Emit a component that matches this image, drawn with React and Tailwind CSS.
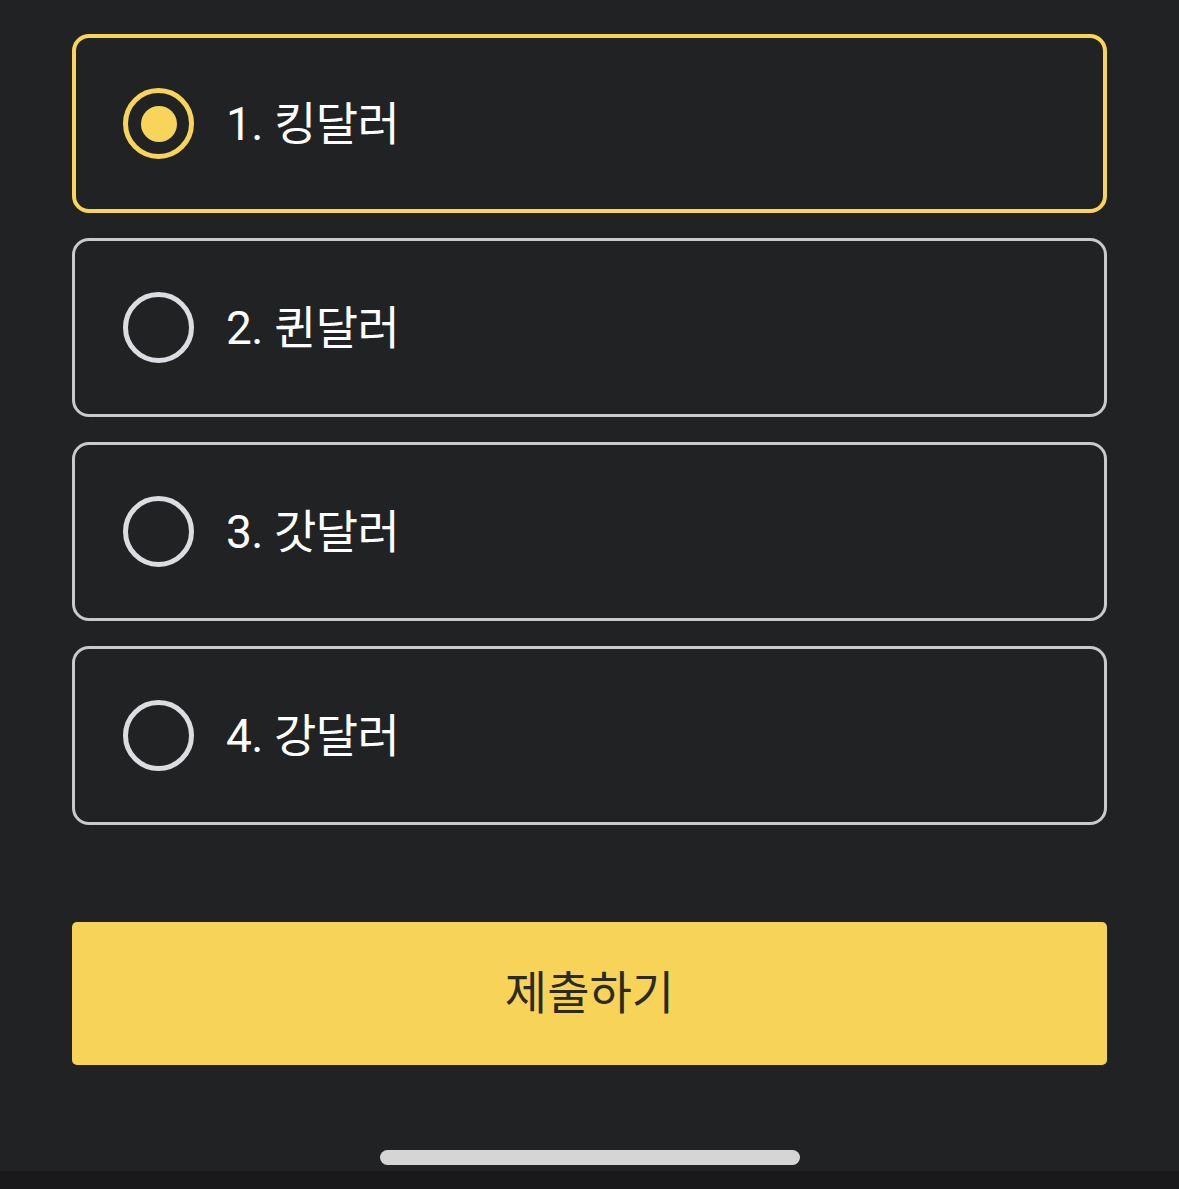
import { useState } from 'react'

const options = ['킹달러', '퀸달러', '갓달러', '강달러']

function Radio({ checked }) {
  if (checked) {
    return (
      <span className="flex h-[71px] w-[71px] shrink-0 items-center justify-center rounded-full border-[5px] border-[#f8d45a]">
        <span className="h-[36px] w-[36px] rounded-full bg-[#f8d45a]" />
      </span>
    )
  }
  return <span className="h-[71px] w-[71px] shrink-0 rounded-full border-[5px] border-[#dcdde0]" />
}

export default function App() {
  const [selected, setSelected] = useState(0)

  return (
    <div
      className="flex min-h-[1189px] w-full flex-col bg-[#212224] text-white"
      style={{ fontFamily: 'Roboto, "Noto Sans CJK KR", sans-serif' }}
    >
      <div className="flex flex-col gap-[25px] px-[72px] pt-[34px]">
        {options.map((label, i) => {
          const active = selected === i
          return (
            <button
              key={label}
              onClick={() => setSelected(i)}
              className={
                active
                  ? 'flex h-[179px] items-center gap-[32px] rounded-[17px] border-[4px] border-[#f8d45a] pl-[47px] text-left'
                  : 'flex h-[179px] items-center gap-[32px] rounded-[17px] border-[3px] border-[#c9cacc] pl-[48px] text-left'
              }
            >
              <Radio checked={active} />
              <span className="text-[46px] leading-none tracking-[-0.5px] text-white">
                {i + 1}. {label}
              </span>
            </button>
          )
        })}
      </div>

      <div className="mt-[97px] px-[72px]">
        <button className="flex h-[143px] w-full items-center justify-center rounded-[5px] bg-[#f7d458] text-[46px] text-[#2b2a25]">
          제출하기
        </button>
      </div>

      <div className="flex flex-1 justify-center pt-[85px]">
        <div className="h-[15px] w-[420px] rounded-full bg-[#d5d5d5]" />
      </div>
      <div className="mt-[6px] h-[18px] w-full bg-[#19191b]" />
    </div>
  )
}
